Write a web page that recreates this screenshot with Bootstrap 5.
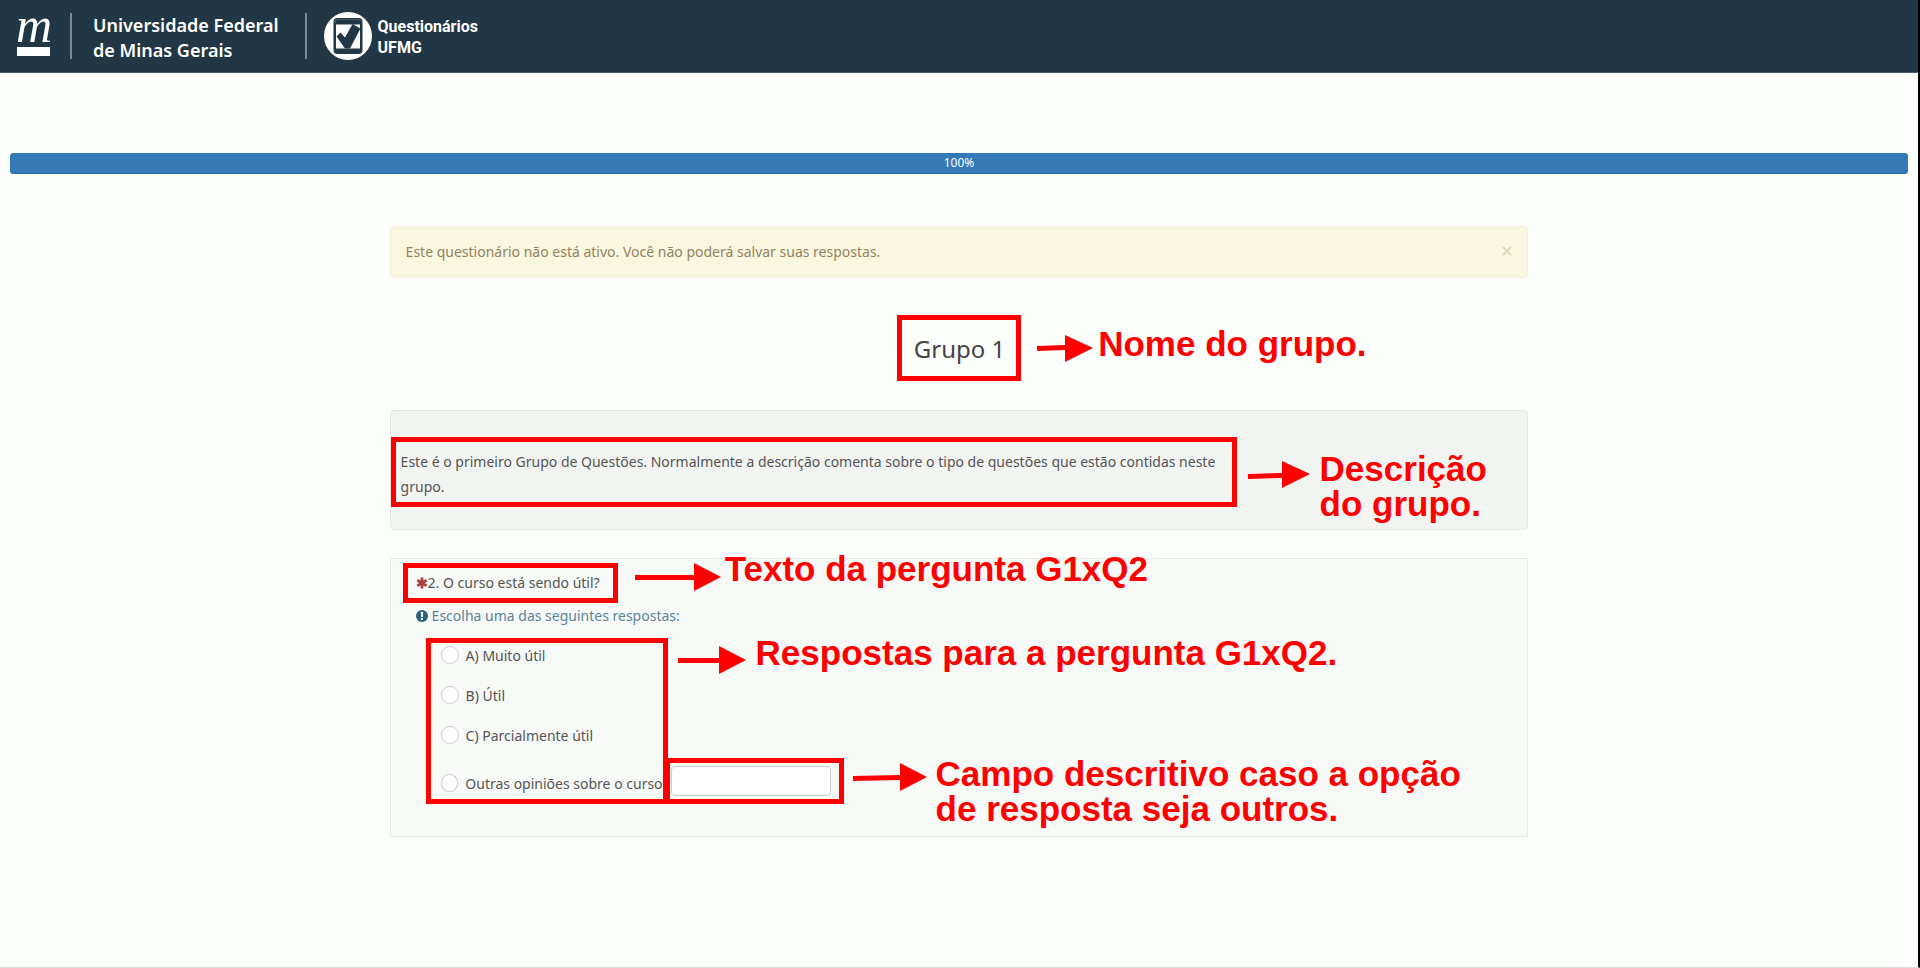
<!DOCTYPE html>
<html lang="pt-BR">
<head>
<meta charset="utf-8">
<meta name="viewport" content="width=device-width, initial-scale=1">
<title>Questionários UFMG</title>
<link href="https://cdn.jsdelivr.net/npm/bootstrap@5.3.0/dist/css/bootstrap.min.css" rel="stylesheet">
<style>
  body { font-family: "Noto Sans", "Open Sans", sans-serif; font-size: 14px; line-height: 25px; color: #555; background: #fdfffc; }
  .page-frame { min-height: 100vh; border-right: 2px solid #000; border-bottom: 1px solid #d9dbd9; }

  /* Header */
  .site-header { height: 73px; background: #213745; border-bottom: 1px solid #4b5d68; padding: 0 16px; }
  .brand-mark { width: 38px; height: 72px; overflow: visible; }
  .brand-divider { width: 2px; height: 46px; background: #7d8a93; }
  .brand-name { margin: 4px 2px 0 21px; font: 600 18px/25px "Noto Sans", sans-serif; color: #fff; }
  .app-name { margin: 1px 0 0 5px; font: 700 16px/21px Roboto, "Liberation Sans", sans-serif; color: #fff; }

  /* Progress and notice */
  .survey-progress { height: 21px; margin: 80px 10px 52px; border-radius: 4px; background: #337ab7; }
  .survey-progress .progress-bar { background: #337ab7; font-size: 12px; line-height: 19px; padding-bottom: 2px; box-shadow: inset 0 -1px 0 #2c6ca4; }
  .survey-wrap { margin: 0 10px; }
  .survey-body { width: 60%; }
  .notice { height: 52px; background: #faf7e1; border: 1px solid #f8eed8; border-radius: 4px; color: #94825c; padding: 0 15px 2px; }
  .notice-close { border: 0; background: none; padding: 0; color: #ded8bf; }

  /* Question group */
  .marked { border: 5px solid #f00; }
  .group-heading { margin: 37px 0 29px; }
  .group-title { margin: 0; font-size: 24px; font-weight: 400; line-height: 55px; color: #444; padding: 1px 11px 0 12px; }
  .group-desc { background: #f2f4f2; border: 1px solid #e5e7e5; border-radius: 4px; padding: 26px 0 22px; }
  .group-text { width: 846px; padding: 7px 5px 3px; }
  .question { background: #f7f9f7; border: 1px solid #e9ebe9; margin-top: 28px; padding: 4px 12px 32px; }
  .question-text { margin: 0; font-size: 14px; font-weight: 400; line-height: 25px; padding: 2px 13px 3px 8px; }
  .required-star { color: #a94442; }
  .help-line { color: #5b8497; margin: 3px 0 12px 13px; gap: 4px; line-height: 20px; }
  .answers { margin-left: 23px; }
  .answer-box { width: 242px; height: 166px; padding-left: 10px; white-space: nowrap; }
  .answer-row { height: 24px; margin-bottom: 16px; gap: 7px; }
  .answer-row input { appearance: none; width: 18px; height: 18px; margin: 0; border: 1px solid #ccc; border-radius: 50%; background: #fff; }
  .other-row { margin-top: 24px; }
  .other-box { width: 179px; height: 46px; margin-left: -3px; padding: 3px 1px; }
  .other-box input { display: block; width: 160px; height: 30px; border: 1px solid #ccc; border-radius: 4px; background: #fff; }

  /* Red notes that lie over the page */
  .callout { position: absolute; white-space: nowrap; color: #f00; font: 700 35px/35px "Liberation Sans", Arial, sans-serif; }
  .callout svg { flex: none; fill: #f00; }
  .callout-name { left: calc(100% + 16px); top: 11px; }
  .callout-desc { left: calc(100% + 16px); top: 9px; }
  .callout-text { left: calc(100% + 17px); top: -12px; }
  .callout-answers { left: calc(100% + 15px); top: -8px; }
  .callout-other { left: calc(100% + 14px); top: -7px; }
</style>
</head>
<body>
<div class="page-frame">
  <header class="site-header d-flex align-items-center">
    <svg class="brand-mark" viewBox="0 0 38 72" role="img" aria-label="UFMG"><text x="0" y="42" font-family="Liberation Serif, serif" font-style="italic" font-size="50" fill="#fff">m</text><rect x="1" y="47" width="33" height="9" fill="#fff"/></svg>
    <div class="brand-divider ms-3"></div>
    <div class="brand-name">Universidade Federal<br>de Minas Gerais</div>
    <div class="brand-divider ms-4"></div>
    <svg class="ms-3" width="50" height="50" viewBox="0 0 50 50" aria-hidden="true"><circle cx="25" cy="25" r="24" fill="#fff"/><rect x="10.500" y="7" width="29" height="36" rx="4" fill="#213745"/><path d="M12.500 12V10q0-1.500 1.500-1.500h22q1.500 0 1.500 1.500" fill="none" stroke="#60717c" stroke-width=".6"/><rect x="13" y="13.500" width="24" height="24" fill="#fff"/><path d="M13.500 25.500l4-4 4.500 5L29.500 13l8 4.500L27 37.500h-5z" fill="#213745"/></svg>
    <div class="app-name">Questionários<br>UFMG</div>
  </header>

  <div class="progress survey-progress" role="progressbar" aria-valuenow="100" aria-valuemin="0" aria-valuemax="100">
    <div class="progress-bar" style="width:100%">100%</div>
  </div>

  <main class="survey-wrap">
    <div class="survey-body mx-auto">
      <div class="notice d-flex align-items-center justify-content-between" role="alert">
        <span>Este questionário não está ativo. Você não poderá salvar suas respostas.</span>
        <button type="button" class="notice-close" aria-label="Fechar"><svg class="d-block" width="10" height="10" viewBox="0 0 10 10" fill="none" stroke="currentColor" stroke-width="2"><path d="M1 1l8 8M9 1l-8 8"/></svg></button>
      </div>

      <div class="group-heading d-flex justify-content-center">
        <div class="position-relative">
          <h1 class="group-title marked">Grupo 1</h1>
          <div class="callout callout-name d-flex gap-1"><svg width="57" height="40"><path d="M0 20l28-1V9l28 13-28 14V24L0 25z"/></svg><span>Nome do grupo.</span></div>
        </div>
      </div>

      <section class="group-desc">
        <div class="group-text marked position-relative">Este é o primeiro Grupo de Questões. Normalmente a descrição comenta sobre o tipo de questões que estão contidas neste grupo.
          <div class="callout callout-desc d-flex gap-2"><svg width="64" height="40"><path d="M0 23l34-1V10l28 13-28 14V27L0 28z"/></svg><span>Descrição<br>do grupo.</span></div>
        </div>
      </section>

      <section class="question">
        <div class="d-flex">
          <div class="position-relative">
            <h2 class="question-text marked d-flex align-items-center"><svg class="required-star" width="12" height="12" viewBox="0 0 12 12" stroke="currentColor" stroke-width="2.800" role="img" aria-label="Obrigatória"><path d="M6 .5v11M1.300 3.300l9.400 5.400M10.700 3.300L1.300 8.700"/></svg>2. O curso está sendo útil?</h2>
            <div class="callout callout-text d-flex gap-1"><svg width="86" height="40"><path d="M0 24h59V12l27 14-27 14V29H0z"/></svg><span>Texto da pergunta G1xQ2</span></div>
          </div>
        </div>
        <div class="help-line d-flex align-items-center"><svg width="12" height="12" viewBox="0 0 12 12" aria-hidden="true"><circle cx="6" cy="6" r="6" fill="#2d617d"/><path d="M4.800 2h2.400L6.900 7H5.100zM5 8h2v2H5z" fill="#fff"/></svg>Escolha uma das seguintes respostas:</div>

        <div class="answers d-flex align-items-end">
          <div class="answer-box marked position-relative">
            <div class="answer-row d-flex align-items-center"><input type="radio" name="util" id="a1"><label for="a1">A) Muito útil</label></div>
            <div class="answer-row d-flex align-items-center"><input type="radio" name="util" id="a2"><label for="a2">B) Útil</label></div>
            <div class="answer-row d-flex align-items-center"><input type="radio" name="util" id="a3"><label for="a3">C) Parcialmente útil</label></div>
            <div class="answer-row other-row d-flex align-items-center"><input type="radio" name="util" id="a4"><label for="a4">Outras opiniões sobre o curso</label></div>
            <div class="callout callout-answers d-flex gap-2"><svg width="70" height="40"><path d="M0 23h41V11l27 14-27 14V28H0z"/></svg><span>Respostas para a pergunta G1xQ2.</span></div>
          </div>
          <div class="other-box marked position-relative">
            <input type="text" aria-label="Outras opiniões sobre o curso">
            <div class="callout callout-other d-flex gap-2"><svg width="75" height="40"><path d="M0 20l47-1V7l27 14-27 14V24L0 25z"/></svg><span>Campo descritivo caso a opção<br>de resposta seja outros.</span></div>
          </div>
        </div>
      </section>
    </div>
  </main>
</div>
<script src="https://cdn.jsdelivr.net/npm/bootstrap@5.3.0/dist/js/bootstrap.bundle.min.js"></script>
</body>
</html>
